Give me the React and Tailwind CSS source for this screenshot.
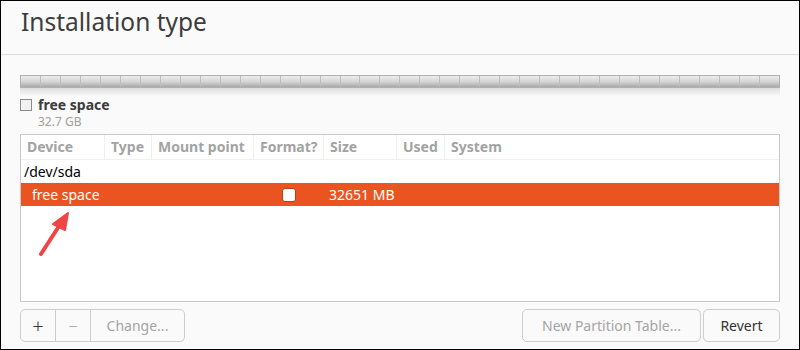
import React from 'react'

const font = { fontFamily: '"Noto Sans", "Open Sans", sans-serif' }

const cols = [
    { label: 'Device', w: 'w-[84px]' },
    { label: 'Type', w: 'w-[47px]' },
    { label: 'Mount point', w: 'w-[102px]' },
    { label: 'Format?', w: 'w-[70px]' },
    { label: 'Size', w: 'w-[73px]' },
    { label: 'Used', w: 'w-[48px]' },
    { label: 'System', w: 'flex-1' },
]

const Arrow = () => (
    <svg className="absolute left-[34px] top-[208px]" width="40" height="52" viewBox="0 0 40 52">
        <line x1="6" y1="45" x2="26" y2="14" stroke="#f04545" strokeWidth="4" strokeLinecap="round" />
        <polygon points="33,4 18,15 30,21" fill="#f04545" stroke="#f04545" strokeWidth="2" strokeLinejoin="round" />
    </svg>
)

const App = () => {
    return (
        <div className="relative w-[800px] h-[350px] bg-[#fafafa] border border-black overflow-hidden text-[#3c3c3c]" style={font}>
            {/* header */}
            <div className="h-[54px] border-b border-[#dcdcdc] pl-[20px] pt-[3px]">
                <h1 className="text-[24.5px] leading-[36px] text-[#3d3d3d]">Installation type</h1>
            </div>

            <div className="px-[19px] pt-[20px]">
                {/* disk bar */}
                <div className="h-[13px] flex border border-[#b0b0b0] bg-gradient-to-b from-[#ececec] via-[#d6d6d6] to-[#a9a9a9]">
                    {Array.from({ length: 38 }).map((_, i) => (
                        <div key={i} className="flex-1 border-r border-[#bdbdbd] last:border-r-0" />
                    ))}
                </div>
                <div className="h-[8px] bg-gradient-to-b from-[#dedede] to-[#fafafa]" />

                {/* legend */}
                <div className="flex gap-[6px] pt-[1px]">
                    <div className="w-[12px] h-[12px] mt-[2px] border border-[#8a8a8a] bg-[#f2f2f2]" />
                    <div className="flex flex-col">
                        <span className="text-[14px] leading-[16px] font-bold text-[#3c3c3c]">free space</span>
                        <span className="text-[12px] leading-[14px] mt-[2px] text-[#a0a0a0]">32.7 GB</span>
                    </div>
                </div>

                {/* partition table */}
                <div className="mt-[5px] h-[168px] bg-white border border-[#c8c8c8] relative">
                    <div className="flex h-[25px] border-b border-[#f0f0f0]">
                        {cols.map((c, i) => (
                            <div key={i} className={`${c.w} ${i < cols.length - 1 ? 'border-r border-[#efefef]' : ''} pl-[6px] text-[14px] leading-[24px] font-bold text-[#a3a3a3]`}>
                                {c.label}
                            </div>
                        ))}
                    </div>
                    <div className="h-[23px] pl-[3px] text-[14px] leading-[23px] text-black">/dev/sda</div>
                    <div className="h-[23px] flex bg-[#e95420] text-white text-[14px] leading-[23px]">
                        <div className="w-[233px] pl-[11px]">free space</div>
                        <div className="w-[70px] flex justify-center items-center">
                            <div className="w-[14px] h-[14px] rounded-[3px] bg-white border border-[#b84016]" />
                        </div>
                        <div className="pl-[5px]">32651 MB</div>
                    </div>
                </div>

                {/* buttons */}
                <div className="flex justify-between mt-[7px] text-[14px]">
                    <div className="flex h-[33px] border border-[#cdcdcd] rounded-[5px] bg-[#fafafa]">
                        <div className="w-[35px] flex items-center justify-center text-[20px] font-light text-[#333] border-r border-[#cdcdcd]">+</div>
                        <div className="w-[35px] flex items-center justify-center text-[16px] font-light text-[#999] border-r border-[#cdcdcd]">−</div>
                        <div className="w-[93px] flex items-center justify-center text-[#a5a5a5]">Change...</div>
                    </div>
                    <div className="flex gap-[2px]">
                        <div className="w-[179px] h-[33px] flex items-center justify-center border border-[#cdcdcd] rounded-[5px] text-[#a5a5a5]">New Partition Table...</div>
                        <div className="w-[77px] h-[33px] flex items-center justify-center border border-[#cdcdcd] rounded-[5px] text-[#333]">Revert</div>
                    </div>
                </div>
            </div>

            <Arrow />
        </div>
    )
}

export default App
